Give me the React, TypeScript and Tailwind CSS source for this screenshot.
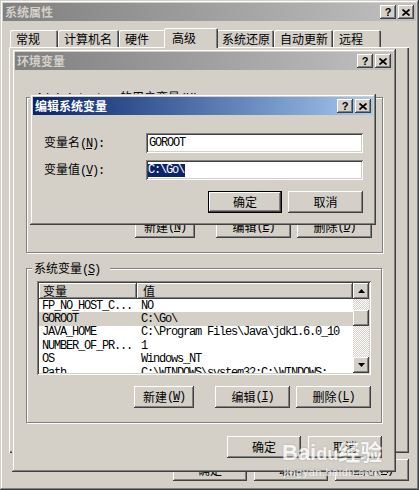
import React from "react";

const btn = "bg-[#d4d0c8] shadow-[inset_-1px_-1px_#404040,inset_1px_1px_#ffffff,inset_-2px_-2px_#808080,inset_2px_2px_#d4d0c8]";
const frame = "bg-[#d4d0c8] shadow-[inset_-1px_-1px_#404040,inset_1px_1px_#d4d0c8,inset_-2px_-2px_#808080,inset_2px_2px_#ffffff]";
const sunken = "shadow-[inset_1px_1px_#808080,inset_-1px_-1px_#ffffff,inset_2px_2px_#404040,inset_-2px_-2px_#d4d0c8]";
const hdr = "bg-[#d4d0c8] shadow-[inset_-1px_-1px_#404040,inset_1px_1px_#ffffff,inset_-2px_-2px_#808080]";
const etched = "border border-[#808080] shadow-[1px_1px_0_#ffffff,inset_1px_1px_0_#ffffff]";
const mono = "font-['Liberation_Mono',monospace] tracking-[-1.2px]";

function Mn({zh, k, sp = false, tail = ""}: {zh: string; k: string; sp?: boolean; tail?: string}) {
    return (
        <>
            {zh}
            <span className={mono}>{sp ? " " : ""}(<span className="underline underline-offset-1">{k}</span>){tail}</span>
        </>
    );
}

function CloseX() {
    return (
        <svg width="8" height="7" viewBox="0 0 8 7">
            <path d="M0.5 0.5L7.5 6.5M7.5 0.5L0.5 6.5" stroke="#000" strokeWidth="1.7"/>
        </svg>
    );
}

function TitleBar({title, active = false}: {title: string; active?: boolean}) {
    return (
        <div
            className={`h-[18px] flex items-center justify-between pl-[2px] pr-[2px] ${active ? "bg-linear-to-r from-[#0a246a] to-[#a6caf0]" : "bg-linear-to-r from-[#808080] to-[#c0c0c0]"}`}>
            <span className={`font-bold text-[12px] leading-[14px] ${active ? "text-white" : "text-[#d4d0c8]"}`}>{title}</span>
            <div className="flex gap-[2px]">
                <div className={`w-[16px] h-[14px] ${btn} flex items-center justify-center`}>
                    <span className="font-['Liberation_Sans',sans-serif] font-bold text-[11px] leading-none text-black">?</span>
                </div>
                <div className={`w-[16px] h-[14px] ${btn} flex items-center justify-center`}>
                    <CloseX/>
                </div>
            </div>
        </div>
    );
}

function Btn({className = "", def = false, children}: {className?: string; def?: boolean; children: React.ReactNode}) {
    return (
        <div className={`h-[22px] ${def ? "border border-black" : ""} ${className}`}>
            <div className={`w-full h-full ${btn} flex items-center justify-center text-[12px] leading-none`}>{children}</div>
        </div>
    );
}

function Arrow({up}: {up: boolean}) {
    return (
        <svg width="7" height="4" viewBox="0 0 7 4">
            <path d={up ? "M3.5 0L7 4H0Z" : "M0 0H7L3.5 4Z"} fill="#000"/>
        </svg>
    );
}

const tabs: [string, string][] = [
    ["常规", "w-[48px]"],
    ["计算机名", "w-[61px]"],
    ["硬件", "w-[47px]"],
    ["高级", "w-[54px]"],
    ["系统还原", "w-[58px]"],
    ["自动更新", "w-[59px]"],
    ["远程", "w-[48px]"],
];

const sysVars: [string, string][] = [
    ["FP_NO_HOST_C...", "NO"],
    ["GOROOT", "C:\\Go\\"],
    ["JAVA_HOME", "C:\\Program Files\\Java\\jdk1.6.0_10"],
    ["NUMBER_OF_PR...", "1"],
    ["OS", "Windows_NT"],
    ["Path", "C:\\WINDOWS\\system32;C:\\WINDOWS;..."],
];

export default function App() {
    return (
        <div className="relative w-[419px] h-[490px] overflow-hidden bg-white font-['Noto_Sans_CJK_SC',sans-serif] text-[12px] text-black">
            {/* 系统属性 */}
            <div className={`absolute left-0 top-0 w-[419px] h-[490px] p-[3px] flex flex-col ${frame}`}>
                <TitleBar title="系统属性"/>
                <div className="mt-[7px] h-[19px] pl-[7px] flex items-end">
                    {tabs.map(([t, w]) =>
                        t === "高级" ? (
                            <div key={t}
                                 className={`${w} -mx-[2px] h-[20px] -mb-[1px] relative z-10 bg-[#d4d0c8] rounded-t-[2px] shadow-[inset_1px_1px_#ffffff,inset_-1px_0_#404040,inset_-2px_0_#808080] pl-[8px] flex items-center leading-none`}>
                                {t}
                            </div>
                        ) : (
                            <div key={t}
                                 className={`${w} h-[17px] bg-[#d4d0c8] rounded-t-[2px] shadow-[inset_1px_1px_#ffffff,inset_-1px_0_#404040,inset_-2px_0_#808080] pl-[6px] pt-[1px] flex items-center leading-none`}>
                                {t}
                            </div>
                        )
                    )}
                </div>
                <div className="ml-[6px] w-[400px] h-[406px] bg-[#d4d0c8] shadow-[inset_1px_1px_#ffffff,inset_-1px_-1px_#404040,inset_-2px_-2px_#808080]"></div>
                <div className="mt-[6px] flex justify-end gap-[7px] pr-[7px]">
                    <Btn className="w-[74px]">确定</Btn>
                    <Btn className="w-[74px]">取消</Btn>
                    <Btn className="w-[74px]"><Mn zh="应用" k="A"/></Btn>
                </div>
            </div>

            {/* 环境变量 */}
            <div className={`absolute left-[12px] top-[49px] w-[384px] h-[423px] p-[3px] flex flex-col ${frame}`}>
                <TitleBar title="环境变量"/>

                <div className={`relative mt-[27px] ml-[11px] w-[357px] h-[156px] ${etched}`}>
                    <div className="absolute -top-[8px] left-[7px] px-[2px] bg-[#d4d0c8] leading-[14px]">
                        <span className={mono}>Administrator </span><Mn zh="的用户变量" k="U"/>
                    </div>
                    <div className={`mt-[13px] ml-[10px] w-[334px] h-[95px] bg-white ${sunken}`}></div>
                    <div className="mt-[10px] flex justify-end pr-[10px]">
                        <Btn className="w-[60px] mr-[21px]"><Mn zh="新建" k="N" sp/></Btn>
                        <Btn className="w-[75px] mr-[6px]"><Mn zh="编辑" k="E" sp/></Btn>
                        <Btn className="w-[75px]"><Mn zh="删除" k="D" sp/></Btn>
                    </div>
                </div>

                <div className={`relative mt-[15px] ml-[11px] w-[356px] h-[155px] ${etched}`}>
                    <div className="absolute -top-[8px] left-[5px] pl-[2px] pr-[10px] bg-[#d4d0c8] leading-[14px]">
                        <Mn zh="系统变量" k="S"/>
                    </div>
                    <div className={`mt-[12px] ml-[10px] w-[334px] h-[94px] bg-white ${sunken} p-[2px] flex`}>
                        <div className="flex-1 overflow-hidden">
                            <div className="flex h-[16px] leading-none">
                                <div className={`w-[98px] ${hdr} pl-[4px] flex items-center`}>变量</div>
                                <div className={`flex-1 ${hdr} pl-[6px] flex items-center`}>值</div>
                            </div>
                            {sysVars.map(([n, v]) => (
                                <div key={n}
                                     className={`flex h-[13.4px] items-center whitespace-nowrap ${n === "GOROOT" ? "bg-[#d4d0c8]" : ""}`}>
                                    <div className={`w-[98px] pl-[3px] ${mono} leading-none`}>{n}</div>
                                    <div className={`flex-1 pl-[4px] ${mono} leading-none overflow-hidden`}>{v}</div>
                                </div>
                            ))}
                        </div>
                        <div className="w-[16px] flex flex-col">
                            <div className={`h-[16px] ${btn} flex items-center justify-center`}><Arrow up/></div>
                            <div className="flex-1 bg-[repeating-conic-gradient(#d4d0c8_0%_25%,#ffffff_0%_50%)] bg-[length:2px_2px]">
                                <div className={`mt-[11px] h-[16px] ${btn}`}></div>
                            </div>
                            <div className={`h-[16px] ${btn} flex items-center justify-center`}><Arrow up={false}/></div>
                        </div>
                    </div>
                    <div className="mt-[11px] flex justify-end pr-[10px]">
                        <Btn className="w-[60px] mr-[21px]"><Mn zh="新建" k="W" sp/></Btn>
                        <Btn className="w-[75px] mr-[6px]"><Mn zh="编辑" k="I" sp/></Btn>
                        <Btn className="w-[75px]"><Mn zh="删除" k="L" sp/></Btn>
                    </div>
                </div>

                <div className="mt-[13px] flex justify-end gap-[7px] pr-[11px]">
                    <Btn className="w-[74px]">确定</Btn>
                    <Btn className="w-[74px]">取消</Btn>
                </div>
            </div>

            {/* 编辑系统变量 */}
            <div className={`absolute left-[30px] top-[94px] w-[346px] h-[131px] p-[3px] flex flex-col ${frame}`}>
                <TitleBar title="编辑系统变量" active/>
                <div className="mt-[18px] flex items-center pl-[11px] pr-[10px]">
                    <div className="w-[102px] leading-none"><Mn zh="变量名" k="N" tail=":"/></div>
                    <div className={`flex-1 h-[20px] bg-white ${sunken} pl-[3px] flex items-center`}>
                        <span className={`${mono} leading-none`}>GOROOT</span>
                    </div>
                </div>
                <div className="mt-[7px] flex items-center pl-[11px] pr-[10px]">
                    <div className="w-[102px] leading-none"><Mn zh="变量值" k="V" tail=":"/></div>
                    <div className={`flex-1 h-[20px] bg-white ${sunken} pl-[2px] flex items-center`}>
                        <span className={`${mono} leading-[13px] bg-[#0a246a] text-white pr-[1px]`}>C:\Go\</span>
                    </div>
                </div>
                <div className="mt-[11px] flex justify-end gap-[6px] pr-[10px]">
                    <Btn className="w-[74px]" def>确定</Btn>
                    <Btn className="w-[75px]">取消</Btn>
                </div>
            </div>

            {/* watermark */}
            <div className="absolute left-[282px] top-[438px] flex flex-col items-center text-white opacity-80 [text-shadow:0_0_2px_#9a9a9a] pointer-events-none">
                <span className="font-['Liberation_Sans',sans-serif] font-bold text-[22px] leading-[24px]">Bai<span className="text-[18px]">du</span><span className="font-['Noto_Sans_CJK_SC',sans-serif]">经验</span></span>
                <span className="font-['Liberation_Sans',sans-serif] text-[11px] leading-[13px] tracking-[0.5px]">jingyan.baidu.com</span>
            </div>
        </div>
    );
}
